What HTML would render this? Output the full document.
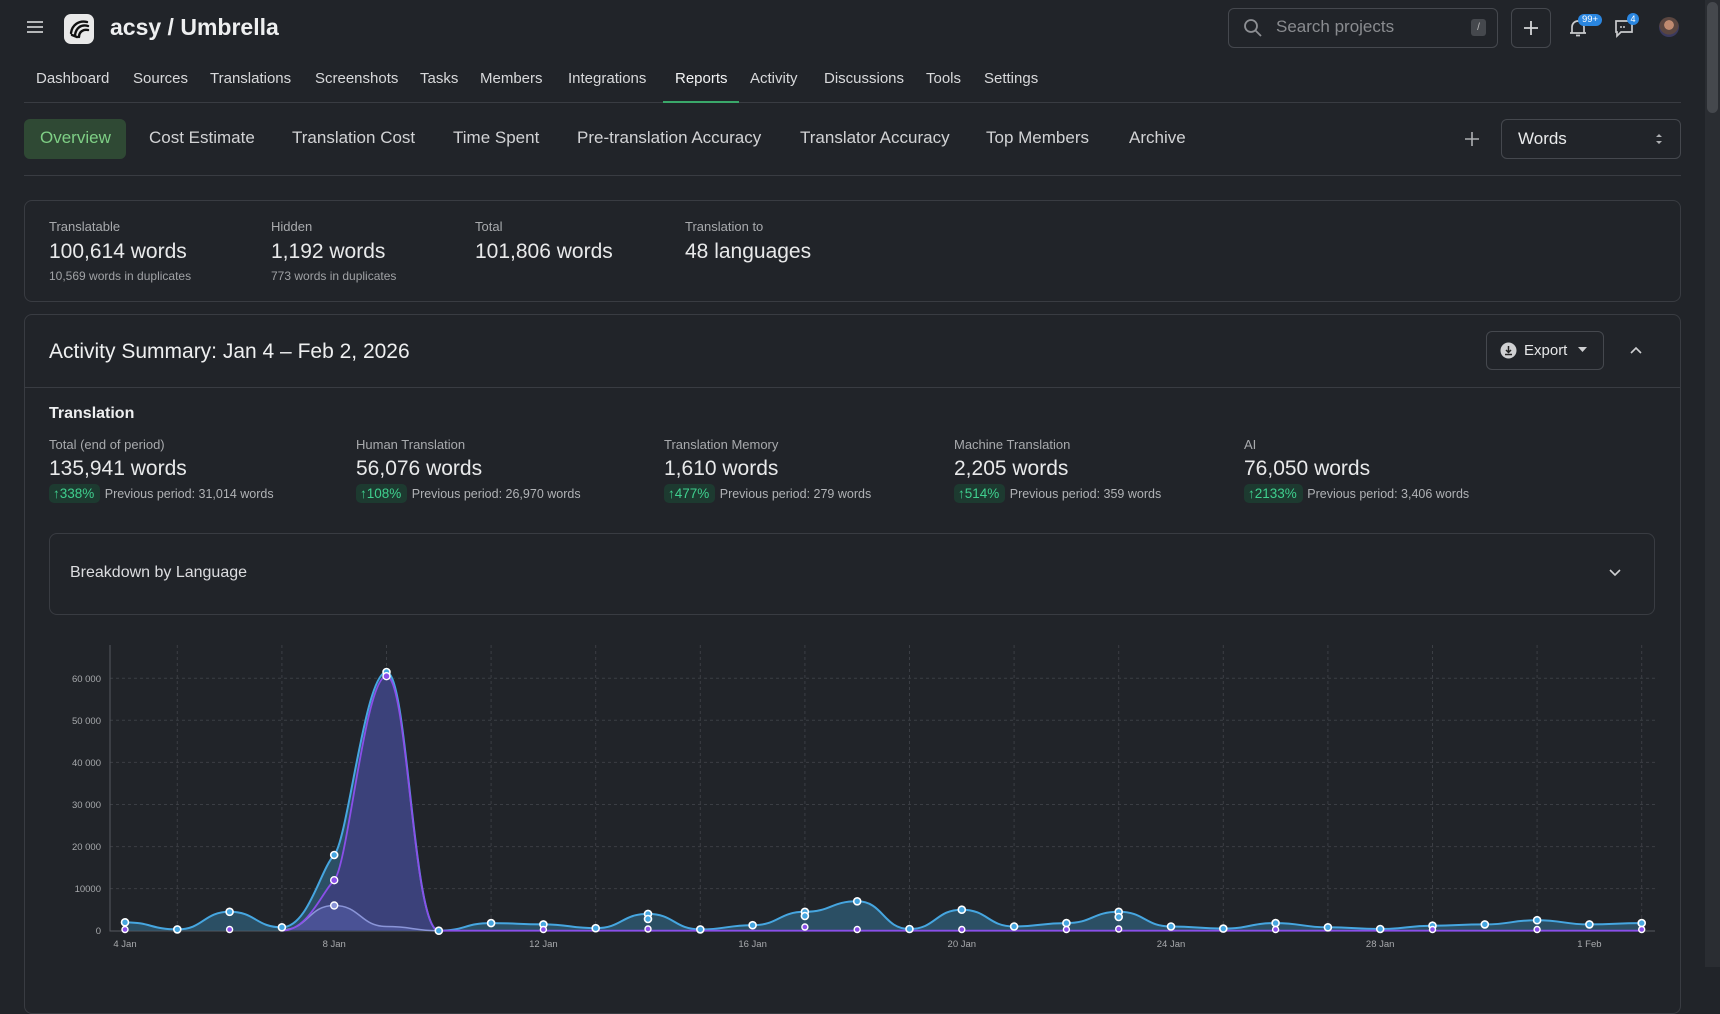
<!DOCTYPE html>
<html><head><meta charset="utf-8">
<style>
*{box-sizing:border-box;margin:0;padding:0}
body{width:1720px;height:967px;overflow:hidden;background:#212429;font-family:"Liberation Sans",sans-serif;color:#e4e5e7;position:relative}
.a{position:absolute;white-space:nowrap}
.nav{top:70px;font-size:15px;color:#d8d9db}
.tab{top:128px;font-size:17px;color:#d2d3d5}
.lbl{font-size:13px;color:#a8aaad}
.val{font-size:21px;color:#e8e9ea}
.sub{font-size:12px;color:#a0a2a5}
.badge{font-size:13.5px;color:#3fcf8e;background:#1d3a30;border-radius:5px;padding:2px 6px 2px 4px}
.prev{font-size:12.5px;color:#b0b2b5}
.card{position:absolute;border:1px solid #393c42;border-radius:8px}
</style></head><body>
<!-- header -->
<svg class="a" style="left:26px;top:20px" width="18" height="14" viewBox="0 0 18 14"><path d="M1 2H17M1 7H17M1 12H17" stroke="#c9cacc" stroke-width="1.8"/></svg>
<div class="a" style="left:64px;top:14px;width:30px;height:30px;background:#e9e9e9;border-radius:7px"></div>
<svg class="a" style="left:64px;top:14px" width="30" height="30" viewBox="0 0 30 30"><path d="M23 8C15 6 8 11 7 19M24 12C17 10 12 14 11 21M24 16C19 15 15 18 15 23M8 21L13 23" stroke="#111" stroke-width="2.4" fill="none" stroke-linecap="round"/></svg>
<div class="a" style="left:110px;top:14px;font-size:23px;font-weight:bold;color:#eeeff0">acsy / Umbrella</div>

<div class="a" style="left:1228px;top:8px;width:270px;height:40px;border:1px solid #45484e;border-radius:6px"></div>
<svg class="a" style="left:1243px;top:18px" width="20" height="20" viewBox="0 0 20 20"><circle cx="8" cy="8" r="6" stroke="#8d8f93" stroke-width="1.8" fill="none"/><path d="M12.5 12.5L18 18" stroke="#8d8f93" stroke-width="1.8"/></svg>
<div class="a" style="left:1276px;top:17px;font-size:17px;color:#8a8c90">Search projects</div>
<div class="a" style="left:1471px;top:19px;width:15px;height:17px;background:#45484d;border-radius:3px;font-size:10px;color:#bbb;text-align:center;line-height:17px">/</div>
<div class="a" style="left:1511px;top:8px;width:40px;height:40px;border:1px solid #45484e;border-radius:6px"></div>
<svg class="a" style="left:1523px;top:20px" width="16" height="16"><path d="M8 1V15M1 8H15" stroke="#d5d6d8" stroke-width="1.8"/></svg>
<svg class="a" style="left:1568px;top:18px" width="20" height="20" viewBox="0 0 20 20"><path d="M4 15V9a6 6 0 0 1 12 0v6H4M2 15H18M8 17.5h4" stroke="#c9cacc" stroke-width="1.7" fill="none"/></svg>
<div class="a" style="left:1578px;top:14px;width:24px;height:12px;background:#2a86e0;border-radius:6px;font-size:9.5px;color:#fff;text-align:center;line-height:12px">99+</div>
<svg class="a" style="left:1613px;top:17px" width="22" height="22" viewBox="0 0 22 22"><path d="M3 4H19V15H8L4 19V15H3Z" stroke="#c9cacc" stroke-width="1.7" fill="none"/><circle cx="8" cy="10" r="1" fill="#c9cacc"/><circle cx="11" cy="10" r="1" fill="#c9cacc"/></svg>
<div class="a" style="left:1627px;top:13px;width:12px;height:12px;background:#2a86e0;border-radius:6px;font-size:9px;color:#fff;text-align:center;line-height:12px">4</div>
<div class="a" style="left:1659px;top:17px;width:20px;height:20px;border-radius:50%;background:radial-gradient(circle at 50% 40%,#c08a70 0 30%,#5b4640 32% 60%,#3b3a5e 62%)"></div>

<!-- nav -->
<div class="a nav" style="left:36px">Dashboard</div>
<div class="a nav" style="left:133px">Sources</div>
<div class="a nav" style="left:210px">Translations</div>
<div class="a nav" style="left:315px">Screenshots</div>
<div class="a nav" style="left:420px">Tasks</div>
<div class="a nav" style="left:480px">Members</div>
<div class="a nav" style="left:568px">Integrations</div>
<div class="a nav" style="left:675px;color:#f2f3f4">Reports</div>
<div class="a nav" style="left:750px">Activity</div>
<div class="a nav" style="left:824px">Discussions</div>
<div class="a nav" style="left:926px">Tools</div>
<div class="a nav" style="left:984px">Settings</div>
<div class="a" style="left:24px;top:102px;width:1657px;height:1px;background:#393c42"></div>
<div class="a" style="left:663px;top:101px;width:76px;height:2px;background:#3aa86a"></div>

<!-- tabs -->
<div class="a" style="left:24px;top:119px;width:102px;height:40px;background:#2f4934;border-radius:6px"></div>
<div class="a tab" style="left:40px;color:#7ecf85">Overview</div>
<div class="a tab" style="left:149px">Cost Estimate</div>
<div class="a tab" style="left:292px">Translation Cost</div>
<div class="a tab" style="left:453px">Time Spent</div>
<div class="a tab" style="left:577px">Pre-translation Accuracy</div>
<div class="a tab" style="left:800px">Translator Accuracy</div>
<div class="a tab" style="left:986px">Top Members</div>
<div class="a tab" style="left:1129px">Archive</div>
<svg class="a" style="left:1465px;top:132px" width="14" height="14"><path d="M7 0V14M0 7H14" stroke="#aeb0b3" stroke-width="1.6"/></svg>
<div class="a" style="left:1501px;top:119px;width:180px;height:40px;border:1px solid #45484e;border-radius:6px"></div>
<div class="a" style="left:1518px;top:129px;font-size:17px;color:#e9eaeb">Words</div>
<svg class="a" style="left:1655px;top:132px" width="8" height="14"><path d="M1 5L4 2L7 5ZM1 9L4 12L7 9Z" fill="#aeb0b3"/></svg>
<div class="a" style="left:24px;top:175px;width:1657px;height:1px;background:#393c42"></div>

<!-- stats card -->
<div class="card" style="left:24px;top:200px;width:1657px;height:102px"></div>
<div class="a lbl" style="left:49px;top:219px">Translatable</div>
<div class="a val" style="left:49px;top:240px">100,614 words</div>
<div class="a sub" style="left:49px;top:269px">10,569 words in duplicates</div>
<div class="a lbl" style="left:271px;top:219px">Hidden</div>
<div class="a val" style="left:271px;top:240px">1,192 words</div>
<div class="a sub" style="left:271px;top:269px">773 words in duplicates</div>
<div class="a lbl" style="left:475px;top:219px">Total</div>
<div class="a val" style="left:475px;top:240px">101,806 words</div>
<div class="a lbl" style="left:685px;top:219px">Translation to</div>
<div class="a val" style="left:685px;top:240px">48 languages</div>

<!-- activity card -->
<div class="card" style="left:24px;top:314px;width:1657px;height:700px"></div>
<div class="a" style="left:49px;top:340px;font-size:21px;color:#eeeff0">Activity Summary: Jan 4 – Feb 2, 2026</div>
<div class="a" style="left:1486px;top:331px;width:118px;height:39px;border:1px solid #45484e;border-radius:6px"></div>
<svg class="a" style="left:1500px;top:342px" width="17" height="17" viewBox="0 0 17 17"><circle cx="8.5" cy="8.5" r="8" fill="#cfd0d2"/><path d="M8.5 4V10M6 8L8.5 10.5L11 8M5 12.5H12" stroke="#222" stroke-width="1.5" fill="none"/></svg>
<div class="a" style="left:1524px;top:342px;font-size:15px;color:#e6e7e8">Export</div>
<svg class="a" style="left:1578px;top:347px" width="9" height="6"><path d="M0 0H9L4.5 5Z" fill="#cfd0d2"/></svg>
<svg class="a" style="left:1630px;top:346px" width="12" height="8"><path d="M1 7L6 2L11 7" stroke="#cfd0d2" stroke-width="1.6" fill="none"/></svg>
<div class="a" style="left:25px;top:387px;width:1655px;height:1px;background:#393c42"></div>

<div class="a" style="left:49px;top:405px;font-size:16px;font-weight:bold;color:#eeeff0">Translation</div>
<div class="a lbl" style="left:49px;top:437px">Total (end of period)</div>
<div class="a val" style="left:49px;top:457px">135,941 words</div>
<div class="a" style="left:49px;top:485px"><span class="badge">↑338%</span> <span class="prev">Previous period: 31,014 words</span></div>
<div class="a lbl" style="left:356px;top:437px">Human Translation</div>
<div class="a val" style="left:356px;top:457px">56,076 words</div>
<div class="a" style="left:356px;top:485px"><span class="badge">↑108%</span> <span class="prev">Previous period: 26,970 words</span></div>
<div class="a lbl" style="left:664px;top:437px">Translation Memory</div>
<div class="a val" style="left:664px;top:457px">1,610 words</div>
<div class="a" style="left:664px;top:485px"><span class="badge">↑477%</span> <span class="prev">Previous period: 279 words</span></div>
<div class="a lbl" style="left:954px;top:437px">Machine Translation</div>
<div class="a val" style="left:954px;top:457px">2,205 words</div>
<div class="a" style="left:954px;top:485px"><span class="badge">↑514%</span> <span class="prev">Previous period: 359 words</span></div>
<div class="a lbl" style="left:1244px;top:437px">AI</div>
<div class="a val" style="left:1244px;top:457px">76,050 words</div>
<div class="a" style="left:1244px;top:485px"><span class="badge">↑2133%</span> <span class="prev">Previous period: 3,406 words</span></div>

<div class="card" style="left:49px;top:533px;width:1606px;height:82px"></div>
<div class="a" style="left:70px;top:564px;font-size:16px;color:#dcdde0">Breakdown by Language</div>
<svg class="a" style="left:1609px;top:569px" width="12" height="8"><path d="M1 1L6 6L11 1" stroke="#cfd0d2" stroke-width="1.6" fill="none"/></svg>

<!-- chart -->
<svg class="a" style="left:0;top:0" width="1720" height="967">
<g stroke="#3b3e44" stroke-dasharray="3 3" stroke-width="1">
<path d="M110 678.3H1655M110 720.3H1655M110 762.4H1655M110 804.5H1655M110 846.6H1655M110 888.6H1655"/>
<path d="M177.3 645V930M281.9 645V930M386.5 645V930M491.1 645V930M595.7 645V930M700.3 645V930M804.9 645V930M909.5 645V930M1014.1 645V930M1118.7 645V930M1223.3 645V930M1327.9 645V930M1432.5 645V930M1537.1 645V930M1641.7 645V930"/>
</g>
<path d="M110 645V931H1655" stroke="#55585e" fill="none"/>
<g font-family="Liberation Sans" font-size="9.5" fill="#a8aaad" text-anchor="end">
<text x="101" y="682">60 000</text><text x="101" y="724">50 000</text><text x="101" y="766">40 000</text><text x="101" y="808">30 000</text><text x="101" y="850">20 000</text><text x="101" y="892">10000</text><text x="101" y="934">0</text>
</g>
<g font-family="Liberation Sans" font-size="9.5" fill="#a8aaad" text-anchor="middle">
<text x="125" y="947">4 Jan</text><text x="334.2" y="947">8 Jan</text><text x="543.4" y="947">12 Jan</text><text x="752.6" y="947">16 Jan</text><text x="961.8" y="947">20 Jan</text><text x="1171" y="947">24 Jan</text><text x="1380.2" y="947">28 Jan</text><text x="1589.4" y="947">1 Feb</text>
</g>
<path id="pa" d="M125 922.3C151.15 922.3 151.15 929.4 177.3 929.4S203.45 911.8 229.6 911.8S255.75 927.3 281.9 927.3C308 927.3 320 870 334.2 855C348 840 365 672 386.5 672S412.65 930.7 438.8 930.7S464.95 923.1 491.1 923.1S517.25 924.4 543.4 924.4S569.55 928.2 595.7 928.2S621.85 913.9 648 913.9S674.15 929.4 700.3 929.4S726.45 925.2 752.6 925.2S778.75 911.8 804.9 911.8S831.05 901.3 857.2 901.3S883.35 929 909.5 929S935.65 909.7 961.8 909.7S987.95 926.5 1014.1 926.5S1040.25 923.1 1066.4 923.1S1092.55 911.8 1118.7 911.8S1144.85 926.5 1171 926.5S1197.15 928.6 1223.3 928.6S1249.45 923.1 1275.6 923.1S1301.75 927.3 1327.9 927.3S1354.05 929 1380.2 929S1406.35 925.7 1432.5 925.7S1458.65 924.4 1484.8 924.4S1510.95 920.2 1537.1 920.2S1563.25 924.4 1589.4 924.4S1615.55 923.1 1641.7 923.1" fill="none"/>
<path d="M125 922.3C151.15 922.3 151.15 929.4 177.3 929.4S203.45 911.8 229.6 911.8S255.75 927.3 281.9 927.3C308 927.3 320 870 334.2 855C348 840 365 672 386.5 672S412.65 930.7 438.8 930.7S464.95 923.1 491.1 923.1S517.25 924.4 543.4 924.4S569.55 928.2 595.7 928.2S621.85 913.9 648 913.9S674.15 929.4 700.3 929.4S726.45 925.2 752.6 925.2S778.75 911.8 804.9 911.8S831.05 901.3 857.2 901.3S883.35 929 909.5 929S935.65 909.7 961.8 909.7S987.95 926.5 1014.1 926.5S1040.25 923.1 1066.4 923.1S1092.55 911.8 1118.7 911.8S1144.85 926.5 1171 926.5S1197.15 928.6 1223.3 928.6S1249.45 923.1 1275.6 923.1S1301.75 927.3 1327.9 927.3S1354.05 929 1380.2 929S1406.35 925.7 1432.5 925.7S1458.65 924.4 1484.8 924.4S1510.95 920.2 1537.1 920.2S1563.25 924.4 1589.4 924.4S1615.55 923.1 1641.7 923.1L1641.7 930.7L125 930.7Z" fill="#2f5d78" fill-opacity="0.75"/>
<path d="M281.9 930.7C308 930.7 322 892 334.2 880.2C348 866 365 676.2 386.5 676.2S412.65 930.7 438.8 930.7Z" fill="#3d3f7c" fill-opacity="0.9"/>
<path d="M281.9 929.9C308.05 929.9 308.05 905.5 334.2 905.5S360.35 926.5 386.5 926.5S412.65 930.7 438.8 930.7" fill="#5a64b0" fill-opacity="0.5" stroke="#8a95d8" stroke-width="1.5"/>
<use href="#pa" stroke="#46a6e0" stroke-width="2"/>
<path d="M281.9 930.7C308 930.7 322 892 334.2 880.2C348 866 365 676.2 386.5 676.2S412.65 930.7 438.8 930.7H1641.7" stroke="#8a4fe8" stroke-width="1.8" fill="none"/>
<g fill="#46a6e0" stroke="#fff" stroke-width="1.6">
<circle cx="125" cy="922.3" r="3.5"/><circle cx="177.3" cy="929.4" r="3.5"/><circle cx="229.6" cy="911.8" r="3.5"/><circle cx="281.9" cy="927.3" r="3.5"/><circle cx="334.2" cy="855" r="3.5"/><circle cx="386.5" cy="672" r="3.5"/><circle cx="438.8" cy="930.7" r="3.5"/><circle cx="491.1" cy="923.1" r="3.5"/><circle cx="543.4" cy="924.4" r="3.5"/><circle cx="595.7" cy="928.2" r="3.5"/><circle cx="648" cy="913.9" r="3.5"/><circle cx="648" cy="919" r="3.5"/><circle cx="700.3" cy="929.4" r="3.5"/><circle cx="752.6" cy="925.2" r="3.5"/><circle cx="804.9" cy="911.8" r="3.5"/><circle cx="804.9" cy="916" r="3.5"/><circle cx="857.2" cy="901.3" r="3.5"/><circle cx="909.5" cy="929" r="3.5"/><circle cx="961.8" cy="909.7" r="3.5"/><circle cx="1014.1" cy="926.5" r="3.5"/><circle cx="1066.4" cy="923.1" r="3.5"/><circle cx="1118.7" cy="911.8" r="3.5"/><circle cx="1118.7" cy="917" r="3.5"/><circle cx="1171" cy="926.5" r="3.5"/><circle cx="1223.3" cy="928.6" r="3.5"/><circle cx="1275.6" cy="923.1" r="3.5"/><circle cx="1327.9" cy="927.3" r="3.5"/><circle cx="1380.2" cy="929" r="3.5"/><circle cx="1432.5" cy="925.7" r="3.5"/><circle cx="1484.8" cy="924.4" r="3.5"/><circle cx="1537.1" cy="920.2" r="3.5"/><circle cx="1589.4" cy="924.4" r="3.5"/><circle cx="1641.7" cy="923.1" r="3.5"/>
</g>
<g fill="#8a4fe8" stroke="#fff" stroke-width="1.4">
<circle cx="125" cy="929.5" r="3"/><circle cx="229.6" cy="929.5" r="3"/><circle cx="334.2" cy="880.2" r="3.5"/><circle cx="386.5" cy="676.2" r="3.5"/><circle cx="334.2" cy="905.5" r="3.5" fill="#8a95d8"/><circle cx="543.4" cy="929.5" r="3"/><circle cx="648" cy="929" r="3"/><circle cx="804.9" cy="927" r="3"/><circle cx="857.2" cy="929.5" r="3"/><circle cx="961.8" cy="929.5" r="3"/><circle cx="1066.4" cy="929.5" r="3"/><circle cx="1118.7" cy="929" r="3"/><circle cx="1275.6" cy="929.5" r="3"/><circle cx="1432.5" cy="929.5" r="3"/><circle cx="1537.1" cy="929.5" r="3"/><circle cx="1641.7" cy="929.5" r="3"/>
</g>
</svg>

<!-- scrollbar -->
<div class="a" style="left:1705px;top:0;width:15px;height:967px;background:#2a2d32"></div>
<div class="a" style="left:1707px;top:2px;width:11px;height:111px;background:#45484d;border-radius:6px"></div>
</body></html>
